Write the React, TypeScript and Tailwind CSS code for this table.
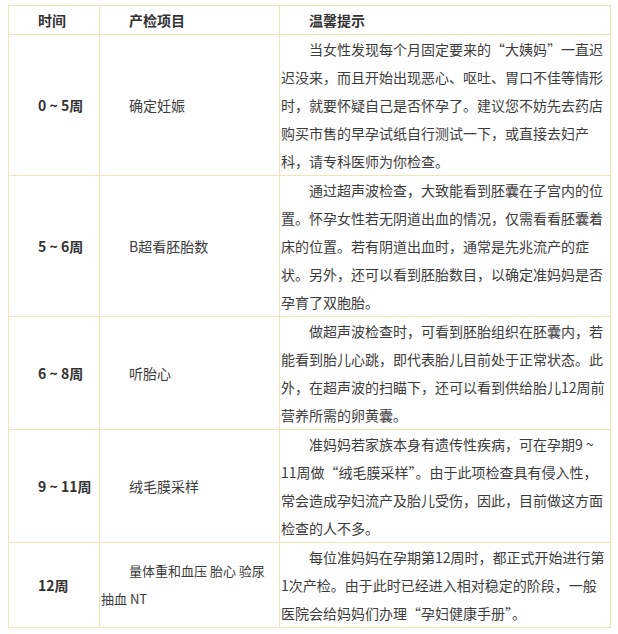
const rows = [
  {
    time: "0 ~ 5周",
    item: "确定妊娠",
    tip: "当女性发现每个月固定要来的“大姨妈”一直迟迟没来，而且开始出现恶心、呕吐、胃口不佳等情形时，就要怀疑自己是否怀孕了。建议您不妨先去药店购买市售的早孕试纸自行测试一下，或直接去妇产科，请专科医师为你检查。",
  },
  {
    time: "5 ~ 6周",
    item: "B超看胚胎数",
    tip: "通过超声波检查，大致能看到胚囊在子宫内的位置。怀孕女性若无阴道出血的情况，仅需看看胚囊着床的位置。若有阴道出血时，通常是先兆流产的症状。另外，还可以看到胚胎数目，以确定准妈妈是否孕育了双胞胎。",
  },
  {
    time: "6 ~ 8周",
    item: "听胎心",
    tip: "做超声波检查时，可看到胚胎组织在胚囊内，若能看到胎儿心跳，即代表胎儿目前处于正常状态。此外，在超声波的扫瞄下，还可以看到供给胎儿12周前营养所需的卵黄囊。",
  },
  {
    time: "9 ~ 11周",
    item: "绒毛膜采样",
    tip: "准妈妈若家族本身有遗传性疾病，可在孕期9 ~ 11周做“绒毛膜采样”。由于此项检查具有侵入性，常会造成孕妇流产及胎儿受伤，因此，目前做这方面检查的人不多。",
  },
];

const cell = "border border-[#efe5bb] p-0 px-px align-middle indent-[28px] text-left";

export default function App() {
  return (
    <div
      className="w-[618px] h-[634px] bg-white pl-2 pt-[5px] text-[14px] leading-[28px] text-[#3c3c3c]"
      style={{ fontFamily: '"Noto Sans CJK SC", "Noto Sans", sans-serif' }}
    >
      <table className="table-fixed border-collapse w-[602px] border border-[#efe5bb]">
        <colgroup>
          <col className="w-[91px]" />
          <col className="w-[180px]" />
          <col className="w-[331px]" />
        </colgroup>
        <thead>
          <tr className="h-[29px]">
            <th className={`${cell} font-bold text-[#333]`}>时间</th>
            <th className={`${cell} font-bold text-[#333]`}>产检项目</th>
            <th className={`${cell} font-bold text-[#333]`}>温馨提示</th>
          </tr>
        </thead>
        <tbody>
          {rows.map((r) => (
            <tr key={r.time}>
              <td className={`${cell} font-bold text-[#333]`}>{r.time}</td>
              <td className={cell}>{r.item}</td>
              <td className={`${cell} align-top`}>{r.tip}</td>
            </tr>
          ))}
          <tr>
            <td className={`${cell} font-bold text-[#333]`}>12周</td>
            <td className={`${cell} text-[13px]`}>
              量体重和血压 胎心 验尿
              <br />
              抽血 NT
            </td>
            <td className={`${cell} align-top`}>
              每位准妈妈在孕期第12周时，都正式开始进行第1次产检。由于此时已经进入相对稳定的阶段，一般医院会给妈妈们办理“孕妇健康手册”。
            </td>
          </tr>
        </tbody>
      </table>
    </div>
  );
}
